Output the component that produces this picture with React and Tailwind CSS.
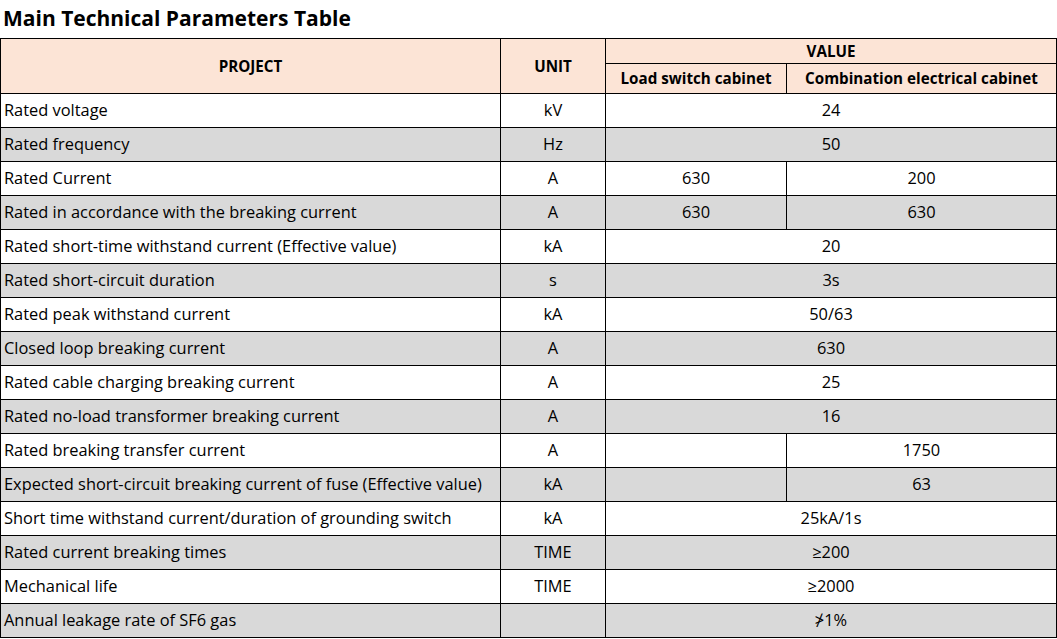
const rows = [
  { name: "Rated voltage", unit: "kV", value: "24" },
  { name: "Rated frequency", unit: "Hz", value: "50" },
  { name: "Rated Current", unit: "A", load: "630", combo: "200" },
  { name: "Rated in accordance with the breaking current", unit: "A", load: "630", combo: "630" },
  { name: "Rated short-time withstand current (Effective value)", unit: "kA", value: "20" },
  { name: "Rated short-circuit duration", unit: "s", value: "3s" },
  { name: "Rated peak withstand current", unit: "kA", value: "50/63" },
  { name: "Closed loop breaking current", unit: "A", value: "630" },
  { name: "Rated cable charging breaking current", unit: "A", value: "25" },
  { name: "Rated no-load transformer breaking current", unit: "A", value: "16" },
  { name: "Rated breaking transfer current", unit: "A", load: "", combo: "1750" },
  { name: "Expected short-circuit breaking current of fuse (Effective value)", unit: "kA", load: "", combo: "63" },
  { name: "Short time withstand current/duration of grounding switch", unit: "kA", value: "25kA/1s" },
  { name: "Rated current breaking times", unit: "TIME", value: "≥200" },
  { name: "Mechanical life", unit: "TIME", value: "≥2000" },
  { name: "Annual leakage rate of SF6 gas", unit: "", value: "≯1%" },
];

const cell = "border border-black p-0";

export default function App() {
  return (
    <div className="w-[1057px] h-[639px] bg-white text-black overflow-hidden" style={{ fontFamily: '"Open Sans", "Noto Sans", sans-serif' }}>
      <h1 className="h-[38px] pl-[3px] pt-[3px] text-[21px] font-bold leading-[30px]">Main Technical Parameters Table</h1>
      <table className="table-fixed border-collapse w-[1056px] text-[16.4px]">
        <colgroup>
          <col className="w-[500px]" />
          <col className="w-[105px]" />
          <col className="w-[181px]" />
          <col className="w-[270px]" />
        </colgroup>
        <thead className="bg-[#fce4d6] font-bold text-[15.2px]">
          <tr className="h-[25px]">
            <th rowSpan={2} className={cell}>PROJECT</th>
            <th rowSpan={2} className={cell}>UNIT</th>
            <th colSpan={2} className={cell}>VALUE</th>
          </tr>
          <tr className="h-[30px]">
            <th className={cell}>Load switch cabinet</th>
            <th className={cell}>Combination electrical cabinet</th>
          </tr>
        </thead>
        <tbody>
          {rows.map((r, i) => (
            <tr key={r.name} className={`h-[34px] ${i % 2 ? "bg-[#d9d9d9]" : "bg-white"}`}>
              <td className={`${cell} pl-[3px] text-left`}>{r.name}</td>
              <td className={`${cell} text-center`}>{r.unit}</td>
              {r.value !== undefined ? (
                <td colSpan={2} className={`${cell} text-center`}>{r.value}</td>
              ) : (
                <>
                  <td className={`${cell} text-center`}>{r.load}</td>
                  <td className={`${cell} text-center`}>{r.combo}</td>
                </>
              )}
            </tr>
          ))}
        </tbody>
      </table>
    </div>
  );
}
